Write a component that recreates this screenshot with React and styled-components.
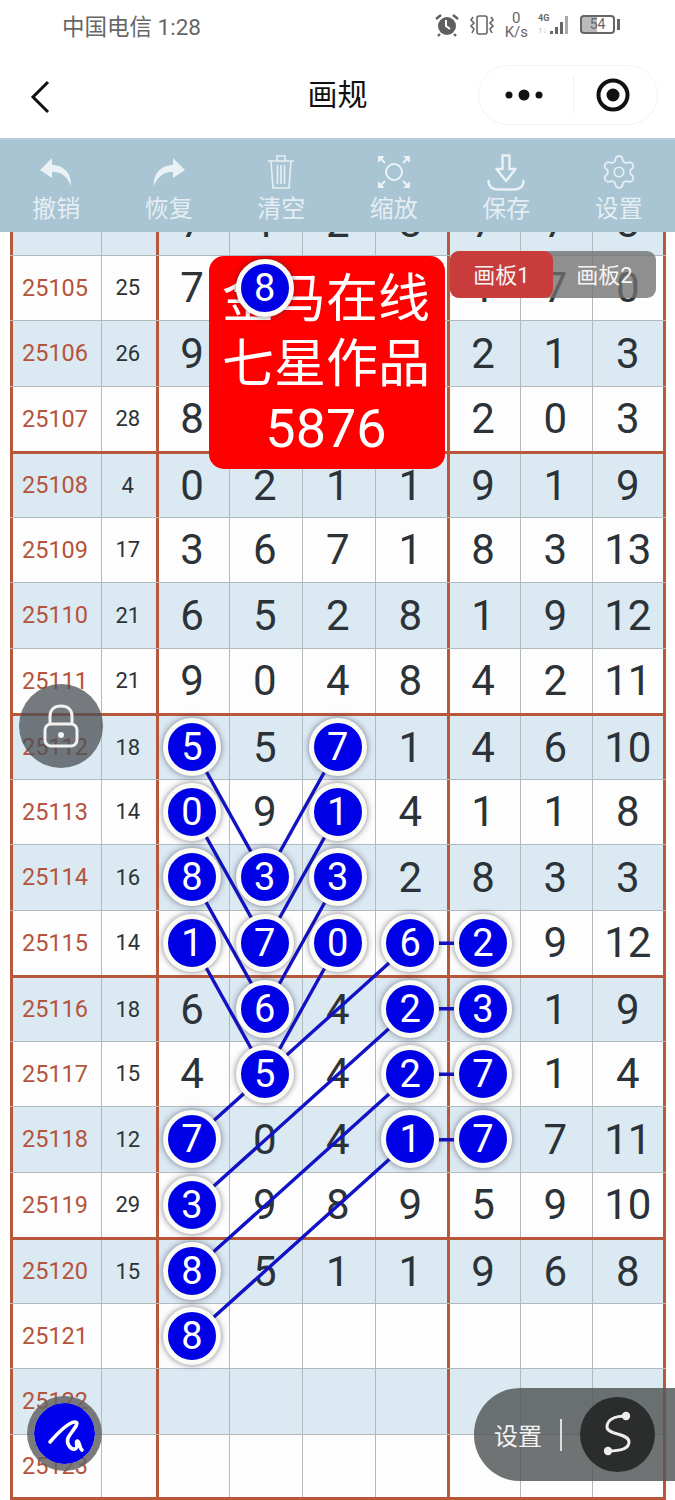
import React from 'react';
import styled, { createGlobalStyle } from 'styled-components';
import { Settings } from 'lucide-react';

const FONT = `Roboto, "Noto Sans CJK SC", sans-serif`;
const RED = '#b9573a';
const GRID = '#b3babe';
const ROW_H = 65.5;
const SCROLL_TOP = 42;

// one row per issue, "*" marks a number that has a ball on it
const ROWS = [
  ['25104', '18', '7', '1', '2', '8', '7', '7', '8'],
  ['25105', '25', '7', '8*', '', '', '1', '7', '0'],
  ['25106', '26', '9', '', '', '', '2', '1', '3'],
  ['25107', '28', '8', '', '', '', '2', '0', '3'],
  ['25108', '4', '0', '2', '1', '1', '9', '1', '9'],
  ['25109', '17', '3', '6', '7', '1', '8', '3', '13'],
  ['25110', '21', '6', '5', '2', '8', '1', '9', '12'],
  ['25111', '21', '9', '0', '4', '8', '4', '2', '11'],
  ['25112', '18', '5*', '5', '7*', '1', '4', '6', '10'],
  ['25113', '14', '0*', '9', '1*', '4', '1', '1', '8'],
  ['25114', '16', '8*', '3*', '3*', '2', '8', '3', '3'],
  ['25115', '14', '1*', '7*', '0*', '6*', '2*', '9', '12'],
  ['25116', '18', '6', '6*', '4', '2*', '3*', '1', '9'],
  ['25117', '15', '4', '5*', '4', '2*', '7*', '1', '4'],
  ['25118', '12', '7*', '0', '4', '1*', '7*', '7', '11'],
  ['25119', '29', '3*', '9', '8', '9', '5', '9', '10'],
  ['25120', '15', '8*', '5', '1', '1', '9', '6', '8'],
  ['25121', '', '8*', '', '', '', '', '', ''],
  ['25122', '', '', '', '', '', '', '', ''],
  ['25123', '', '', '', '', '', '', '', ''],
];

// [row index, column] pairs joined by the blue lines
const LINKS = [
  [[8, 0], [10, 1]],
  [[9, 0], [11, 1]],
  [[10, 0], [12, 1]],
  [[11, 0], [13, 1]],
  [[8, 2], [10, 1]],
  [[9, 2], [11, 1]],
  [[10, 2], [12, 1]],
  [[11, 2], [13, 1]],
  [[11, 3], [14, 0]],
  [[12, 3], [15, 0]],
  [[13, 3], [16, 0]],
  [[14, 3], [17, 0]],
  [[11, 3], [11, 4]],
  [[12, 3], [12, 4]],
  [[13, 3], [13, 4]],
  [[14, 3], [14, 4]],
];

const COL_X = [182.5, 255.5, 328.5, 401, 473.5, 546, 619];

const GlobalStyle = createGlobalStyle`
  html, body { margin: 0; padding: 0; background: #fff; }
  * { box-sizing: border-box; }
`;

const Page = styled.div`
  position: relative;
  width: 675px;
  height: 1500px;
  overflow: hidden;
  background: #fff;
  font-family: ${FONT};
`;

const StatusBar = styled.div`
  height: 55px;
  padding: 0 60px 6px 62px;
  display: flex;
  align-items: center;
  justify-content: space-between;
  color: #666;
`;

const Carrier = styled.div`
  font-size: 22.5px;
`;

const StatusIcons = styled.div`
  display: flex;
  align-items: center;
  gap: 10px;
`;

const Speed = styled.div`
  font-size: 15px;
  line-height: 14px;
  text-align: center;
`;

const Battery = styled.div`
  position: relative;
  width: 35px;
  height: 19px;
  border: 2px solid #666;
  border-radius: 4px;
  font-size: 14px;
  line-height: 15px;
  text-align: center;
  background: linear-gradient(90deg, #bbb 48%, transparent 48%);
  &::after {
    content: '';
    position: absolute;
    right: -7px;
    top: 2px;
    width: 3px;
    height: 11px;
    background: #666;
  }
`;

const NavBar = styled.div`
  height: 83px;
  padding: 0 17px 0 30px;
  display: flex;
  align-items: center;
  justify-content: space-between;
  position: relative;
`;

const Title = styled.div`
  position: absolute;
  left: 0;
  right: 0;
  top: 20px;
  text-align: center;
  font-size: 30px;
  line-height: 40px;
  color: #111;
`;

const Capsule = styled.div`
  width: 180px;
  height: 60px;
  border: 1.5px solid #f3f3f3;
  border-radius: 30px;
  display: flex;
  align-items: center;
  justify-content: space-between;
  padding: 0 26px 0 26px;
  margin-top: -4px;
`;

const CapsuleLine = styled.div`
  width: 1px;
  height: 38px;
  background: #f0f0f0;
  margin-left: 8px;
`;

const Toolbar = styled.div`
  height: 94px;
  background: #a9c4d3;
  display: grid;
  grid-template-columns: repeat(6, 1fr);
  box-shadow: inset 0 2px 0 #b9cfdb;
`;

const ToolItem = styled.div`
  display: flex;
  flex-direction: column;
  align-items: center;
  color: #e4eef3;
  font-size: 24px;
  line-height: 30px;
`;

const ToolIcon = styled.div`
  height: 56px;
  padding-top: 12px;
  display: flex;
  align-items: center;
  justify-content: center;
`;

const Scroller = styled.div`
  position: relative;
  height: 1268px;
  overflow: hidden;
  background: #fff;
`;

const Board = styled.div`
  position: relative;
  margin: -${SCROLL_TOP}px 0 0 9.5px;
  width: 656.5px;
`;

const Row = styled.div`
  display: grid;
  grid-template-columns: 91px 55px 73px 73px 73px 72px 73px 72px 74.5px;
  height: ${ROW_H}px;
  background: ${({ $shaded }) => ($shaded ? '#dbe9f3' : '#fdfdfd')};
  border-bottom: 1.5px solid ${GRID};
  ${({ $major }) => $major && `border-top: 3px solid ${RED}; margin-top: -1.5px; height: ${ROW_H + 1.5}px;`}
  ${({ $last }) => $last && `border-bottom: 3px solid ${RED};`}
`;

const Cell = styled.div`
  display: flex;
  align-items: center;
  justify-content: center;
  border-left: ${({ $thick }) => ($thick ? `3px solid ${RED}` : `1.5px solid ${GRID}`)};
  padding-right: ${({ $thick }) => ($thick ? '3px' : '1.5px')};
  ${({ $end }) => $end && `border-right: 3px solid ${RED}; padding-right: 0;`}
  font-size: 42px;
  color: #2b3338;
`;

const IssueCell = styled(Cell)`
  font-size: 23.5px;
  color: #b5543c;
`;

const SumCell = styled(Cell)`
  font-size: 22px;
  color: #2b3338;
`;

const Ball = styled.div`
  position: relative;
  z-index: 5;
  flex: none;
  width: 58px;
  height: 58px;
  border-radius: 50%;
  background: #0000e6;
  border: 5.5px solid #fbfbf6;
  box-shadow: 0 0 6px rgba(40, 40, 60, 0.6);
  color: #fff;
  font-size: 38px;
  display: flex;
  align-items: center;
  justify-content: center;
`;

const Lines = styled.svg`
  position: absolute;
  left: 0;
  top: 0;
  z-index: 3;
  pointer-events: none;
`;

const Banner = styled.div`
  position: absolute;
  z-index: 4;
  left: 199.5px;
  top: 66px;
  width: 236px;
  height: 213px;
  border-radius: 15px;
  background: #fe0000;
  color: #fff;
  font-size: 52px;
  line-height: 64.5px;
  text-align: center;
  padding: 12px 2px 0 0;
`;

const BannerCount = styled.span`
  font-size: 54px;
`;

const BoardTabs = styled.div`
  position: absolute;
  z-index: 4;
  left: 440.5px;
  top: 61px;
  width: 206px;
  height: 47px;
  display: flex;
  border-radius: 9px;
  background: rgba(112, 112, 112, 0.78);
  color: #f5f5f5;
  font-size: 22px;
`;

const BoardTab = styled.div`
  width: 103px;
  padding-bottom: 4px;
  display: flex;
  align-items: center;
  justify-content: center;
  border-radius: 9px;
  background: ${({ $active }) => ($active ? '#c83d3b' : 'transparent')};
`;

const LockButton = styled.div`
  position: absolute;
  z-index: 6;
  left: 19px;
  top: 684px;
  width: 84px;
  height: 84px;
  border-radius: 50%;
  background: rgba(75, 80, 85, 0.76);
  display: flex;
  align-items: center;
  justify-content: center;
`;

const PenButton = styled.div`
  position: absolute;
  z-index: 6;
  left: 27px;
  top: 1396px;
  width: 75px;
  height: 75px;
  border-radius: 50%;
  background: #0000ec;
  border: 7.5px solid rgba(100, 100, 100, 0.85);
  background-clip: padding-box;
  display: flex;
  align-items: center;
  justify-content: center;
`;

const SetupPill = styled.div`
  position: absolute;
  z-index: 6;
  left: 474px;
  top: 1388px;
  width: 201px;
  height: 93px;
  border-radius: 46px 0 0 46px;
  background: rgba(85, 88, 88, 0.84);
  display: flex;
  align-items: center;
  padding-left: 20px;
  color: #f2f2f2;
  font-size: 24px;
`;

const PillLine = styled.div`
  width: 1.5px;
  height: 32px;
  background: #ddd;
  margin: 0 18px;
`;

const SetupRound = styled.div`
  width: 75px;
  height: 75px;
  border-radius: 50%;
  background: #2b2d2d;
  display: flex;
  align-items: center;
  justify-content: center;
`;

const UndoIcon = ({ flip }) => (
  <svg width="34" height="30" viewBox="0 0 34 30" style={flip ? { transform: 'scaleX(-1)' } : undefined}>
    <path
      d="M13 1 L1 13 L13 21 V15 C22 14 29 20 32 29 C33 17 25 8 13 8 Z"
      fill="#eaf2f6"
    />
  </svg>
);

const TrashIcon = () => (
  <svg width="28" height="36" viewBox="0 0 28 36" fill="none" stroke="#e6eff4" strokeWidth="1.6">
    <path d="M1 7 H27 M10 7 V2 H18 V7 M4 7 L6 34 H22 L24 7 M10.5 11 V30 M14 11 V30 M17.5 11 V30" />
  </svg>
);

const ScanIcon = () => (
  <svg width="34" height="34" viewBox="0 0 34 34" fill="none" stroke="#eaf2f6" strokeWidth="2">
    <circle cx="17" cy="17" r="8" />
    <path d="M3 3 L8 8 M31 3 L26 8 M3 31 L8 26 M31 31 L26 26" />
    <path
      d="M1 1 H8 L1 8 Z M33 1 H26 L33 8 Z M1 33 H8 L1 26 Z M33 33 H26 L33 26 Z"
      fill="#eaf2f6"
      stroke="none"
    />
  </svg>
);

const SaveIcon = () => (
  <svg width="38" height="37" viewBox="0 0 38 37" fill="none" stroke="#eaf2f6" strokeWidth="2.4" strokeLinejoin="round">
    <path d="M15.5 1.5 H22.5 V15 H28.5 L19 27 L9.5 15 H15.5 Z" />
    <path d="M1.5 27 C1.5 33 6 35.5 11 35.5 H27 C32 35.5 36.5 33 36.5 27" strokeLinecap="round" />
  </svg>
);

const AlarmIcon = () => (
  <svg width="24" height="24" viewBox="0 0 24 24">
    <circle cx="12" cy="13" r="9" fill="#5f5f5f" />
    <path d="M11 7 V13 L15 16" stroke="#fff" strokeWidth="2" fill="none" />
    <path d="M1 6 L6 2 M23 6 L18 2 M5 21 L3 23 M19 21 L21 23" stroke="#5f5f5f" strokeWidth="2.4" />
  </svg>
);

const VibrateIcon = () => (
  <svg width="26" height="24" viewBox="0 0 26 24" fill="none" stroke="#666" strokeWidth="1.6">
    <rect x="8" y="3" width="10" height="18" rx="2" />
    <path d="M4 4 L2 7 L5 10 L2 13 L5 16 L3 20 M22 4 L24 7 L21 10 L24 13 L21 16 L23 20" />
  </svg>
);

const SignalIcon = () => (
  <svg width="32" height="24" viewBox="0 0 32 24">
    <text x="0" y="8" fontSize="9" fontWeight="700" fill="#666" fontFamily="Roboto, sans-serif">4G</text>
    <text x="0" y="20" fontSize="8" fill="#bbb" fontFamily="Roboto, sans-serif">1↓</text>
    <path d="M12 18 h3 v3 h-3 z M17 14 h3 v7 h-3 z M22 9 h3 v12 h-3 z" fill="#666" />
    <path d="M27 3 h3 v18 h-3 z" fill="#aaa" />
  </svg>
);

const ball = (row, col) => ({ x: COL_X[col], y: row * ROW_H + ROW_H / 2 });

const TOOLS = [
  { label: '撤销', icon: <UndoIcon /> },
  { label: '恢复', icon: <UndoIcon flip /> },
  { label: '清空', icon: <TrashIcon /> },
  { label: '缩放', icon: <ScanIcon /> },
  { label: '保存', icon: <SaveIcon /> },
  { label: '设置', icon: <Settings size={38} color="#e6eff4" strokeWidth={1.1} /> },
];

export default function App() {
  return (
    <Page>
      <GlobalStyle />
      <StatusBar>
        <Carrier>中国电信 1:28</Carrier>
        <StatusIcons>
          <AlarmIcon />
          <VibrateIcon />
          <Speed>
            0
            <br />
            K/s
          </Speed>
          <SignalIcon />
          <Battery>54</Battery>
        </StatusIcons>
      </StatusBar>
      <NavBar>
        <svg width="20" height="34" viewBox="0 0 20 34" fill="none" stroke="#111" strokeWidth="3">
          <path d="M18 2 L3 17 L18 32" />
        </svg>
        <Title>画规</Title>
        <Capsule>
          <svg width="38" height="12" viewBox="0 0 38 12" fill="#111">
            <circle cx="4" cy="6" r="3.5" />
            <circle cx="19" cy="6" r="5.5" />
            <circle cx="34" cy="6" r="3.5" />
          </svg>
          <CapsuleLine />
          <svg width="36" height="36" viewBox="0 0 36 36">
            <circle cx="18" cy="18" r="14.5" fill="none" stroke="#111" strokeWidth="4" />
            <circle cx="18" cy="18" r="6.5" fill="#111" />
          </svg>
        </Capsule>
      </NavBar>
      <Toolbar>
        {TOOLS.map((tool) => (
          <ToolItem key={tool.label}>
            <ToolIcon>{tool.icon}</ToolIcon>
            {tool.label}
          </ToolItem>
        ))}
      </Toolbar>
      <Scroller>
        <Board>
          {ROWS.map(([issue, sum, ...nums], i) => (
            <Row
              key={issue}
              $shaded={i % 2 === 0}
              $major={i % 4 === 0 && i > 0}
              $last={i === ROWS.length - 1}
            >
              <IssueCell $thick>{issue}</IssueCell>
              <SumCell>{sum}</SumCell>
              {nums.map((n, c) => (
                <Cell key={c} $thick={c === 0 || c === 4} $end={c === 6}>
                  {n.endsWith('*') ? <Ball>{n[0]}</Ball> : n}
                </Cell>
              ))}
            </Row>
          ))}
          <Lines width="656" height="1310" viewBox="0 0 656 1310">
            {LINKS.map(([a, b], i) => {
              const p = ball(a[0], a[1]);
              const q = ball(b[0], b[1]);
              return <line key={i} x1={p.x} y1={p.y} x2={q.x} y2={q.y} stroke="#1111c6" strokeWidth="3.4" />;
            })}
          </Lines>
          <Banner>
            金马在线
            <br />
            七星作品
            <br />
            <BannerCount>5876</BannerCount>
          </Banner>
          <BoardTabs>
            <BoardTab $active>画板1</BoardTab>
            <BoardTab>画板2</BoardTab>
          </BoardTabs>
        </Board>
      </Scroller>
      <LockButton>
        <svg width="36" height="44" viewBox="0 0 36 44" fill="none" stroke="#f2f2f2" strokeWidth="3">
          <path d="M7 20 V12 C7 6 11 2 18 2 C25 2 29 6 29 12 V20" />
          <rect x="2" y="20" width="32" height="22" rx="6" />
          <circle cx="18" cy="31" r="3" fill="#f2f2f2" stroke="none" />
        </svg>
      </LockButton>
      <PenButton>
        <svg width="60" height="60" viewBox="0 0 60 60" fill="none" stroke="#fff" strokeWidth="3.6" strokeLinecap="round" strokeLinejoin="round">
          <path d="M15 38 C22 30 33 18 40 18 C46 18 36 28 33 34 C31 40 36 46 40 45 C44 44 40 38 42 37 C45 37 44 44 47 46" />
        </svg>
      </PenButton>
      <SetupPill>
        设置
        <PillLine />
        <SetupRound>
          <svg width="75" height="75" viewBox="0 0 75 75" fill="none" stroke="#eee" strokeWidth="3">
            <path d="M46 19 C36 19 27 22 27 30 C27 38 49 36 49 45 C49 52 38 54 28 54" />
            <circle cx="46" cy="19" r="4.2" fill="#eee" stroke="none" />
            <circle cx="28" cy="54" r="4.2" fill="#eee" stroke="none" />
          </svg>
        </SetupRound>
      </SetupPill>
    </Page>
  );
}
